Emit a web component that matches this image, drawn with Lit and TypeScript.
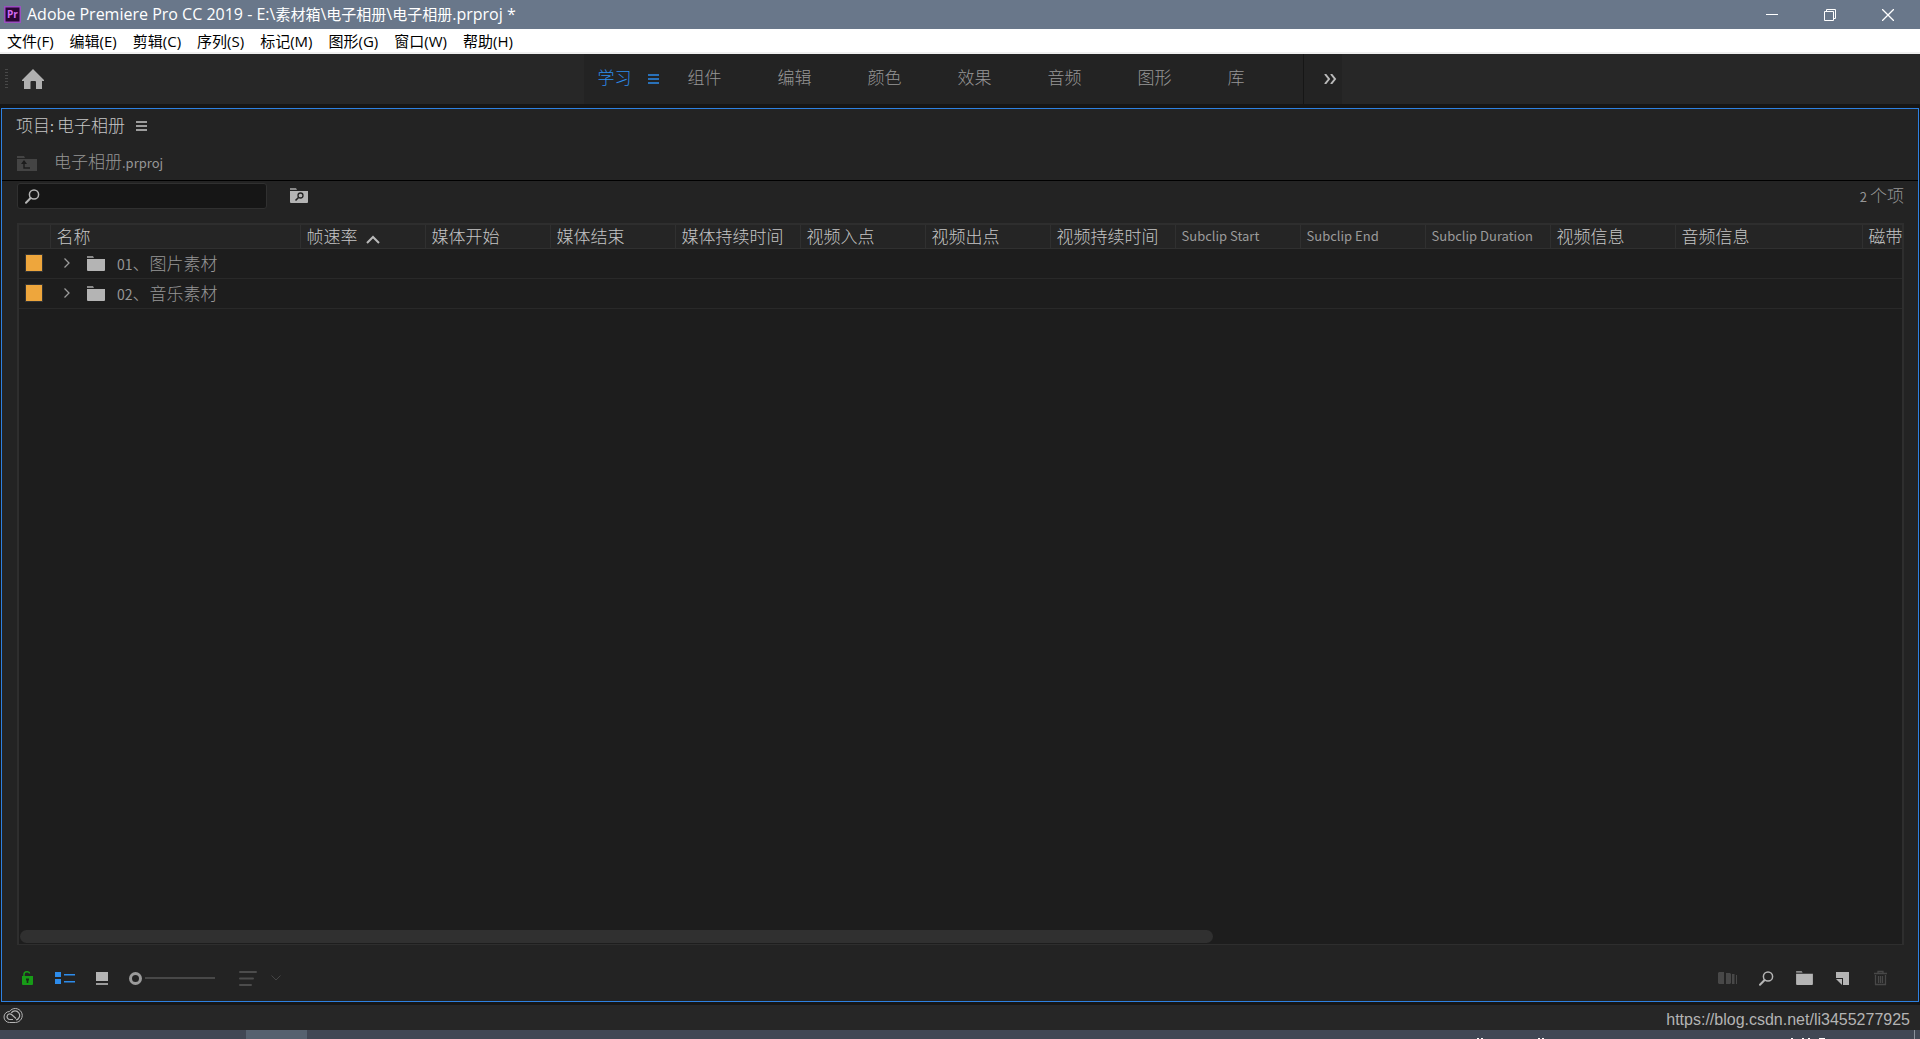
import { LitElement, html, css, svg, nothing } from "lit";
import { customElement, state } from "lit/decorators.js";

const MENUS = ["文件(F)", "编辑(E)", "剪辑(C)", "序列(S)", "标记(M)", "图形(G)", "窗口(W)", "帮助(H)"];
const WORKSPACES = ["学习", "组件", "编辑", "颜色", "效果", "音频", "图形", "库"];

interface Column {
  label: string;
  kind: string;
  latin?: boolean;
  sorted?: boolean;
}

const COLUMNS: Column[] = [
  { label: "名称", kind: "name" },
  { label: "帧速率", kind: "std", sorted: true },
  { label: "媒体开始", kind: "std" },
  { label: "媒体结束", kind: "std" },
  { label: "媒体持续时间", kind: "std" },
  { label: "视频入点", kind: "std" },
  { label: "视频出点", kind: "std" },
  { label: "视频持续时间", kind: "std" },
  { label: "Subclip Start", kind: "std", latin: true },
  { label: "Subclip End", kind: "std", latin: true },
  { label: "Subclip Duration", kind: "std", latin: true },
  { label: "视频信息", kind: "std" },
  { label: "音频信息", kind: "wide" },
  { label: "磁带", kind: "rest" },
];

const BINS = [
  { num: "01", title: "、图片素材" },
  { num: "02", title: "、音乐素材" },
];

const folderShape = svg`<path d="M0 0h6l1 2H0z" fill="#8a8a8a"/><path d="M0 3h18v11a1 1 0 0 1-1 1H1a1 1 0 0 1-1-1z" fill="#b4b4b4"/>`;
const folder = html`<svg width="18" height="15" viewBox="0 0 18 15">${folderShape}</svg>`;

const magnifier = html`<svg width="15" height="15" viewBox="0 0 15 15" fill="none" stroke="#b4b4b4">
  <circle cx="9" cy="5.5" r="4.6" stroke-width="1.5"/><path d="M5.6 9 1 13.8" stroke-width="2" stroke-linecap="round"/></svg>`;

const burger = html`<svg width="11" height="10" viewBox="0 0 11 10" fill="none" stroke="currentColor">
  <path d="M0 1h11M0 5h11M0 9h11" stroke-width="1.4"/></svg>`;

@customElement("app-root")
export class AppRoot extends LitElement {
  @state() private active = 0;
  @state() private open = new Set<string>();

  static styles = css`
    :host {
      display: flex;
      flex-direction: column;
      height: 100vh;
      overflow: hidden;
      background: #161616;
      color: #c6c6c6;
      font-family: "Noto Sans CJK SC", sans-serif;
      font-size: 17px;
      font-weight: 300;
      line-height: 20px;
    }
    * { box-sizing: border-box; }
    svg { display: block; flex: none; }
    button {
      display: flex;
      align-items: center;
      margin: 0;
      padding: 0;
      border: 0;
      background: none;
      color: inherit;
      font: inherit;
      white-space: nowrap;
    }
    .latin { font-size: 13px; font-weight: 400; }
    .num { font-size: 14px; font-weight: 400; }

    .titlebar {
      display: flex;
      align-items: center;
      flex: none;
      height: 29px;
      padding: 0 3px 0 4px;
      background: #69778a;
      color: #fff;
      font-family: "Open Sans", "Noto Sans CJK SC", sans-serif;
      font-size: 16px;
      font-weight: 400;
    }
    .titlebar h1 { flex: 1; margin: 0 0 0 6px; padding-bottom: 2px; font: inherit; white-space: nowrap; }
    .titlebar .cjk { font-size: 15px; }
    .window-button { justify-content: center; width: 58px; height: 29px; }

    .menubar {
      display: flex;
      flex: none;
      gap: 16px;
      height: 25px;
      padding-left: 7px;
      border-bottom: 2px solid #f0f0f0;
      background: #fff;
      color: #000;
      font-family: "Open Sans", "Noto Sans CJK SC", sans-serif;
      font-size: 15px;
      font-weight: 400;
    }

    .workspaces {
      display: flex;
      align-items: stretch;
      flex: none;
      height: 50px;
      background: #272727;
    }
    .edge { display: flex; align-items: center; flex: 1; gap: 14px; }
    .edge-start { padding-left: 5px; }
    .grip {
      width: 3px;
      height: 20px;
      background: repeating-linear-gradient(#484848 0 1px, #272727 1px 3px);
    }
    .tabs {
      display: flex;
      gap: 56px;
      padding: 0 58px 4px 14px;
      border-right: 1px solid #161616;
      background: #232323;
      color: #969696;
    }
    .tab-slot { display: flex; align-items: center; }
    .tab[aria-selected="true"] { color: #2d8ceb; }
    .tab-menu { width: 11px; margin: 4px -27px 0 16px; color: #2d8ceb; }
    .more { width: 38px; padding-left: 20px; background: #232323; }

    .panel {
      display: flex;
      flex-direction: column;
      flex: 1;
      min-height: 0;
      margin: 4px 1px 3px;
      border: 1px solid #2d80e0;
      background: #232323;
    }
    .panel-title {
      display: flex;
      align-items: center;
      flex: none;
      gap: 11px;
      height: 34px;
      padding: 0 0 2px 14px;
    }
    .panel-title h2 { margin: 0; font: inherit; }
    .panel-title button { padding-top: 2px; }
    .crumb {
      display: flex;
      align-items: center;
      flex: none;
      gap: 17px;
      height: 38px;
      padding: 0 0 0 15px;
      border-bottom: 1px solid #000;
      color: #969696;
    }
    .crumb svg { margin-top: 4px; }
    .find {
      display: flex;
      align-items: flex-start;
      flex: none;
      height: 42px;
      padding: 2px 14px 0 15px;
      color: #969696;
    }
    .search {
      display: flex;
      align-items: center;
      gap: 8px;
      width: 250px;
      height: 26px;
      padding: 0 7px;
      border: 1px solid #303030;
      border-radius: 3px;
      background: #161616;
    }
    .search input {
      flex: 1;
      min-width: 0;
      border: 0;
      outline: 0;
      background: none;
      color: #b9b9b9;
      font: inherit;
      font-size: 14px;
    }
    .find-bin { height: 24px; margin-left: 23px; }
    .count { margin-left: auto; line-height: 24px; }

    .list {
      display: flex;
      flex-direction: column;
      flex: 1;
      min-height: 0;
      margin: 0 14px 0 15px;
      border: 2px solid #2e2e2e;
      border-width: 2px 2px 1px;
      background: #1d1d1d;
    }
    .scroll { flex: 1; min-height: 0; }
    table { width: 100%; border-collapse: collapse; table-layout: fixed; }
    th {
      height: 23px;
      padding: 0 0 0 6px;
      border-bottom: 1px solid #303030;
      border-left: 1px solid #303030;
      background: #252525;
      font-weight: inherit;
      line-height: 20px;
      text-align: left;
      white-space: nowrap;
    }
    th:first-child { border-left: 0; }
    th.latin { color: #9b9b9b; font-weight: 400; }
    .head { display: flex; align-items: center; gap: 8px; }
    .head svg { margin-top: 6px; }
    .col-label { width: 31px; }
    .col-name { width: 250px; }
    .col-std { width: 125px; }
    .col-wide { width: 187px; }
    td { height: 30px; padding: 0; border-bottom: 1px solid #292929; color: #969696; }
    .swatch {
      width: 18px;
      height: 18px;
      margin-left: 6px;
      border: 1px solid #343434;
      background: #eea63c;
    }
    .bin { display: flex; align-items: center; padding-left: 14px; white-space: nowrap; }
    .bin svg { margin-right: 12px; }
    .bin .twist { width: 23px; height: 20px; }
    .opened svg { transform: rotate(90deg); }
    .track { flex: none; height: 15px; padding: 1px; }
    .thumb { width: 63.4%; height: 13px; border-radius: 7px; background: #303030; }

    .tools {
      display: flex;
      align-items: center;
      flex: none;
      height: 56px;
      padding: 10px 28px 0 19px;
    }
    .list-view { margin-left: 21px; }
    .icon-view { margin-left: 20px; }
    .zoom {
      width: 86px;
      height: 14px;
      margin: 0 0 0 20px;
      appearance: none;
      background: linear-gradient(#484848, #484848) 16px 6px / 70px 2px no-repeat;
    }
    .zoom::-webkit-slider-thumb {
      appearance: none;
      width: 13px;
      height: 13px;
      border: 3px solid #9b9b9b;
      border-radius: 50%;
      background: #232323;
    }
    .sort { gap: 14px; margin-left: 24px; }
    .actions { display: flex; align-items: center; gap: 18px; margin-left: auto; }
    .actions button { justify-content: center; width: 20px; }

    .status {
      display: flex;
      align-items: center;
      justify-content: space-between;
      flex: none;
      height: 25px;
      padding: 0 10px 0 3px;
      background: #262626;
    }
    .status svg { margin-bottom: 3px; }
    .status a {
      padding-top: 4px;
      color: #b4b4b4;
      font-family: "Liberation Sans", sans-serif;
      font-size: 16px;
      font-weight: 400;
      text-decoration: none;
    }
    .taskbar {
      display: flex;
      justify-content: flex-end;
      flex: none;
      height: 9px;
      background: linear-gradient(#56616f, #56616f) 246px 0 / 61px 9px no-repeat #414754;
    }
  `;

  private toggle(num: string) {
    const next = new Set(this.open);
    next.has(num) ? next.delete(num) : next.add(num);
    this.open = next;
  }

  private renderTitle() {
    return html`
      <header class="titlebar">
        <svg width="17" height="18" viewBox="0 0 17 18">
          <rect x=".75" y=".75" width="15.5" height="15.5" fill="#2a0634" stroke="#9a4fc0" stroke-width="1.5"/>
          <text x="3" y="12" font-family="Open Sans, sans-serif" font-size="10" font-weight="700" fill="#d56cf5">Pr</text>
        </svg>
        <h1>Adobe Premiere Pro CC 2019 - E:\\<span class="cjk">素材箱</span>\\<span class="cjk">电子相册</span>\\<span class="cjk">电子相册</span>.prproj *</h1>
        <button class="window-button" aria-label="最小化">
          <svg width="12" height="12" viewBox="0 0 12 12"><path d="M0 5h12v1H0z" fill="#fff"/></svg>
        </button>
        <button class="window-button" aria-label="还原">
          <svg width="12" height="12" viewBox="0 0 12 12" fill="none" stroke="#fff"><path d="M.5 2.5h9v9h-9zM2.5 2.5v-2h9v9h-2"/></svg>
        </button>
        <button class="window-button" aria-label="关闭">
          <svg width="12" height="12" viewBox="0 0 12 12" stroke="#fff" stroke-width="1.3"><path d="M0 0l12 12M12 0L0 12"/></svg>
        </button>
      </header>
      <nav class="menubar">${MENUS.map((m) => html`<button>${m}</button>`)}</nav>`;
  }

  private renderWorkspaces() {
    return html`
      <div class="workspaces">
        <div class="edge edge-start">
          <span class="grip"></span>
          <button aria-label="主页">
            <svg width="22" height="20" viewBox="0 0 22 20"><path d="M11 0 22 11v1h-2v8h-6v-7a1 1 0 0 0-1-1H9.500a1 1 0 0 0-1 1v7H2v-8H0v-1z" fill="#b0b0b0"/></svg>
          </button>
        </div>
        <div class="tabs" role="tablist">
          ${WORKSPACES.map(
            (w, i) => html`<div class="tab-slot">
              <button class="tab" role="tab" aria-selected=${i === this.active} @click=${() => (this.active = i)}>${w}</button>
              ${i === this.active ? html`<button class="tab-menu" aria-label="工作区菜单">${burger}</button>` : nothing}
            </div>`
          )}
        </div>
        <button class="more" aria-label="更多工作区">
          <svg width="13" height="10" viewBox="0 0 13 10" fill="none" stroke="#b9b9b9" stroke-width="2"><path d="M1 0l4 5-4 5M7 0l4 5-4 5"/></svg>
        </button>
        <div class="edge"></div>
      </div>`;
  }

  private renderTable() {
    return html`
      <div class="list">
        <div class="scroll">
          <table>
            <colgroup>
              <col class="col-label" />
              ${COLUMNS.map((c) => html`<col class="col-${c.kind}" />`)}
            </colgroup>
            <thead>
              <tr>
                <th aria-label="标签"></th>
                ${COLUMNS.map(
                  (c) => html`<th class=${c.latin ? "latin" : ""}>
                    ${c.sorted
                      ? html`<div class="head">${c.label}
                          <svg width="14" height="9" viewBox="0 0 14 9" fill="none" stroke="#b9b9b9" stroke-width="2"><path d="M1 8l6-6 6 6"/></svg>
                        </div>`
                      : c.label}
                  </th>`
                )}
              </tr>
            </thead>
            <tbody>
              ${BINS.map(
                (b) => html`<tr>
                  <td><div class="swatch"></div></td>
                  <td>
                    <div class="bin">
                      <button class="twist ${this.open.has(b.num) ? "opened" : ""}" aria-label="展开" @click=${() => this.toggle(b.num)}>
                        <svg width="6" height="10" viewBox="0 0 6 10" fill="none" stroke="#9b9b9b" stroke-width="1.3"><path d="M.5 .5 5 5 .5 9.500"/></svg>
                      </button>
                      ${folder}<span><span class="num">${b.num}</span>${b.title}</span>
                    </div>
                  </td>
                  <td colspan="13"></td>
                </tr>`
              )}
            </tbody>
          </table>
        </div>
        <div class="track"><div class="thumb"></div></div>
      </div>`;
  }

  private renderTools() {
    return html`
      <footer class="tools">
        <button aria-label="项目可写">
          <svg width="13" height="14" viewBox="0 0 13 14">
            <path d="M3 6V3.500C3 0 8.500 0 8.500 2.500" fill="none" stroke="#179b17" stroke-width="1.500"/>
            <path d="M1 5h11v8a1 1 0 0 1-1 1H2a1 1 0 0 1-1-1z" fill="#179b17"/>
            <path d="M5 7.500h3v2H7.300V12H5.700V9.500H5z" fill="#173017"/>
          </svg>
        </button>
        <button class="list-view" aria-label="列表视图">
          <svg width="20" height="14" viewBox="0 0 20 14" fill="#2d8ceb"><path d="M0 1h6v5H0zM0 8h6v5H0zM9 3h11v1.500H9zM9 10h11v1.500H9z"/></svg>
        </button>
        <button class="icon-view" aria-label="图标视图">
          <svg width="14" height="13" viewBox="0 0 14 13"><path d="M1 0h12v9H1z" fill="#b4b4b4"/><path d="M1 11h12v2H1z" fill="#9b9b9b"/></svg>
        </button>
        <input class="zoom" type="range" min="0" max="100" value="0" aria-label="调整图标和缩览图的大小" />
        <button class="sort" aria-label="排序图标">
          <svg width="18" height="15" viewBox="0 0 18 15" stroke="#4c4c4c" stroke-width="2" stroke-linecap="round"><path d="M1 1h16M1 7.500h13M1 14h11"/></svg>
          <svg width="10" height="6" viewBox="0 0 10 6" fill="none" stroke="#444"><path d="M.5 .5 5 5 9.500 .5"/></svg>
        </button>
        <div class="actions">
          <button aria-label="自动匹配序列">
            <svg width="20" height="12" viewBox="0 0 20 12" fill="#484848"><path d="M0 1l1-1h5v12H1l-1-1zM8 1h4l1 1v9l-1 1H8zM14 2h2.500v10H14zM18 3h1v9h-1z"/></svg>
          </button>
          <button aria-label="查找">${magnifier}</button>
          <button aria-label="新建素材箱"><svg width="17" height="14" viewBox="0 0 18 15">${folderShape}</svg></button>
          <button aria-label="新建项">
            <svg width="15" height="15" viewBox="0 0 15 15"><path d="M1 1h13v13H8V7H1z" fill="#b4b4b4"/><path d="M1 8h6v6z" fill="#b4b4b4"/></svg>
          </button>
          <button aria-label="清除">
            <svg width="15" height="16" viewBox="0 0 15 16" fill="none" stroke="#484848"><path d="M1 3.500h13M5 3V1.500h5V3M2.500 5v9.500h10V5M5.500 6v7M7.500 6v7M9.500 6v7" stroke-width="1.300"/></svg>
          </button>
        </div>
      </footer>`;
  }

  render() {
    return html`
      ${this.renderTitle()} ${this.renderWorkspaces()}
      <main class="panel">
        <div class="panel-title">
          <h2>项目<span class="num">: </span>电子相册</h2>
          <button aria-label="面板菜单">${burger}</button>
        </div>
        <div class="crumb">
          <svg width="20" height="15" viewBox="0 0 20 15">
            <path d="M0 0h7l1 2H0zM0 3h20v12H0z" fill="#444"/>
            <path d="M7 6v6h6" fill="none" stroke="#1c1c1c" stroke-width="1.400"/><path d="M7 4 10 8H4z" fill="#1c1c1c"/>
          </svg>
          <span>电子相册<span class="latin">.prproj</span></span>
        </div>
        <div class="find">
          <label class="search">${magnifier}<input type="text" aria-label="搜索" /></label>
          <button class="find-bin" aria-label="从查询创建新的搜索素材箱">
            <svg width="18" height="15" viewBox="0 0 18 15">
              ${folderShape}
              <circle cx="10.500" cy="7.500" r="2.500" fill="none" stroke="#232323" stroke-width="1.300"/>
              <path d="M8.500 9.500 5.500 12.500" stroke="#232323" stroke-width="1.600"/>
            </svg>
          </button>
          <span class="count"><span class="latin">2 </span>个项</span>
        </div>
        ${this.renderTable()} ${this.renderTools()}
      </main>
      <div class="status">
        <svg width="20" height="16" viewBox="0 0 20 16" fill="none" stroke="#b4b4b4">
          <path d="M6.500 14.500A5.500 5.500 0 0 1 6.500 3.500A7 7 0 1 1 12.500 14.500z" stroke-width="1"/>
          <path d="M10 11.500H7a2.800 2.800 0 1 1 1.600-5L13 10.500M8.300 4.800A4.600 4.600 0 1 1 13 12" stroke-width="1.200"/>
        </svg>
        <a href="https://blog.csdn.net/li3455277925">https://blog.csdn.net/li3455277925</a>
      </div>
      <div class="taskbar">
        <svg width="444" height="9" viewBox="0 0 444 9">
          <path d="M1 8h2v1H1zM5 8h2v1H5zM62 8h2v1h-2zM66 8h2v1h-2zM315 8h2v1h-2zM326 8h2v1h-2zM332 8h2v1h-2zM343 8h6v1h-6z" fill="#fff"/>
          <path d="M438 0h1v9h-1z" fill="#8b929c"/>
        </svg>
      </div>`;
  }
}
